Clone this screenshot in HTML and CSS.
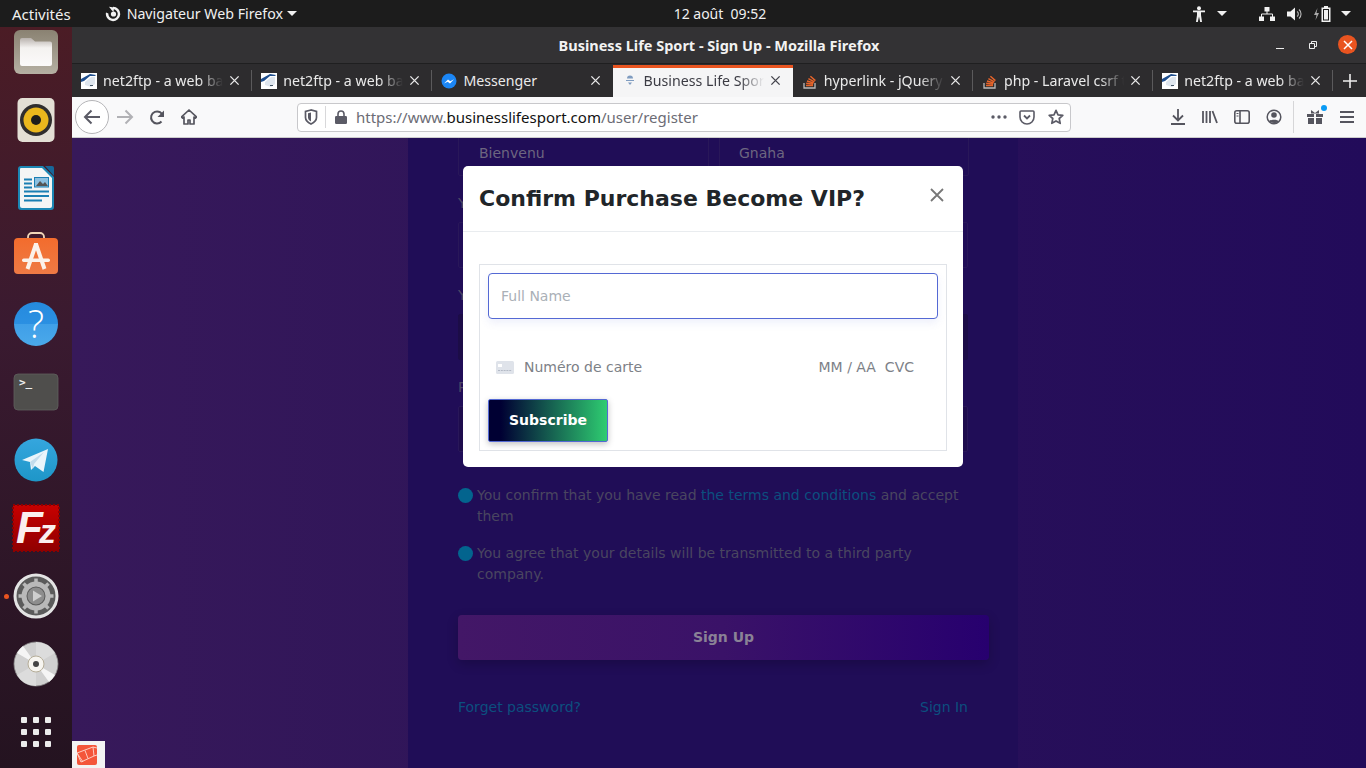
FILE: index.html
```html
<!DOCTYPE html>
<html lang="fr">
<head>
<meta charset="utf-8">
<title>Business Life Sport - Sign Up</title>
<link rel="stylesheet" href="styles.css">
</head>
<body>
<svg class="defs" width="0" height="0" aria-hidden="true">
  <defs>
    <symbol id="fav-net" viewBox="0 0 16 16"><rect width="16" height="16" fill="#fff"/><path d="M0 6 9 1l6 1-1 1-5 0-6 5-3 1z" fill="#1f4f8f"/><path d="M4 9l6-5 4 0 0 7-4 3-6-2z" fill="#dfe6ee"/><path d="M9 12h3v1H9z" fill="#456"/></symbol>
    <symbol id="fav-so" viewBox="0 0 16 16"><path d="M2 10v5h11v-5" fill="none" stroke="#bcbbbb" stroke-width="1.3"/><path d="M4 12.5h7M4.2 10.3l6.9.8M5 8l6.6 2M6.4 5.6l6 3.2M8.4 3.3l5 4.3" fill="none" stroke="#e8642a" stroke-width="1.4"/></symbol>
    <symbol id="tab-x" viewBox="0 0 12 12"><path d="M1.5 1.5l9 9M10.500 1.500l-9 9" fill="none" stroke="currentColor" stroke-width="1.500"/></symbol>
  </defs>
</svg>
<div class="screen">
  <header class="topbar">
    <div class="tb-left">
      <span class="tb-activities">Activités</span>
      <span class="tb-app">
        <svg class="tb-spin" viewBox="0 0 16 16" width="16" height="16"><path d="M8 .8a7.200 7.200 0 1 1-7 5.600l2.400 1.100A4.700 4.700 0 1 0 8 3.300z" fill="#f2f2f2"/><path d="M4 .8 9 1.500 8.500 6 6.500 4z" fill="#f2f2f2"/><circle cx="8.500" cy="8" r="2.600" fill="#f2f2f2"/></svg>
        Navigateur Web Firefox
        <i class="caret"></i>
      </span>
    </div>
    <div class="tb-clock">12 août&nbsp;&nbsp;09:52</div>
    <div class="tb-right">
      <svg class="tb-access" viewBox="0 0 14 16" width="14" height="16"><circle cx="7" cy="2.200" r="2" fill="#f2f2f2"/><path d="M1 4.500h12v1.800H9V9l1 7H8.200L7 10.500 5.800 16H4l1-7V6.300H1z" fill="#f2f2f2"/></svg>
      <i class="caret caret-access"></i>
      <svg class="tb-net" viewBox="0 0 16 14" width="16" height="14"><path d="M5.500 0h5v4.500h-5zM0 9.500h5V14H0zM11 9.500h5V14h-5z" fill="#f2f2f2"/><path d="M8 4v3M2.500 10V7h11v3" fill="none" stroke="#f2f2f2"/></svg>
      <svg class="tb-vol" viewBox="0 0 16 14" width="16" height="14"><path d="M0 4.500h3.500L8 .5v13l-4.500-4H0z" fill="#f2f2f2"/><path d="M10 4.500a3 3 0 0 1 0 5M12 2.500a6 6 0 0 1 0 9" fill="none" stroke="#bbb" stroke-width="1.100"/></svg>
      <svg class="tb-batt" viewBox="0 0 18 16" width="18" height="16"><path d="M3.500 2 0 9h2.500L1.500 14 5 7H2.500z" fill="#aaa"/><path d="M10 0h4v1.500h2.500V16h-9V1.500H10z" fill="#f2f2f2"/><path d="M9 3h6v11.500H9z" fill="#1c1c1c"/><path d="M10 4h4v9.500h-4z" fill="#f2f2f2"/></svg>
      <i class="caret"></i>
    </div>
  </header>

  <div class="desktop">
    <nav class="dock">
      <svg class="slot" viewBox="0 0 48 48"><defs><linearGradient id="gFolder" x1="0" y1="0" x2="0" y2="1"><stop offset="0" stop-color="#8a8272"/><stop offset="1" stop-color="#b5b0a3"/></linearGradient><linearGradient id="gFolderIn" x1="0" y1="0" x2="0" y2="1"><stop offset="0" stop-color="#b9b2ae"/><stop offset=".35" stop-color="#f4f2f0"/><stop offset="1" stop-color="#fbfafa"/></linearGradient></defs><rect x="2" y="2" width="44" height="44" rx="6" fill="url(#gFolder)"/><path d="M8 12a2 2 0 0 1 2-2h9l4 3.500h15a2 2 0 0 1 2 2V36a2 2 0 0 1-2 2H10a2 2 0 0 1-2-2z" fill="url(#gFolderIn)"/></svg>
      <svg class="slot" viewBox="0 0 48 48"><rect x="5.500" y="2" width="37" height="44" rx="5" fill="#e3dfd5"/><circle cx="24" cy="24" r="16" fill="#2f2e2e"/><circle cx="24" cy="24" r="12.500" fill="#eab71d"/><circle cx="24" cy="24" r="5" fill="#1d1c1c"/></svg>
      <svg class="slot" viewBox="0 0 48 48"><path d="M9 2h22l11 11v30a3 3 0 0 1-3 3H9a3 3 0 0 1-3-3V5a3 3 0 0 1 3-3z" fill="#1b87b5"/><path d="M9 4h21l10 10v28a2 2 0 0 1-2 2H10a2 2 0 0 1-2-2V5a1 1 0 0 1 1-1z" fill="#f4f5f5"/><path d="M33 2h7a2 2 0 0 1 2 2v8z" fill="#17679a"/><path d="M12 14.500h8v2h-8zM12 18.500h8v2h-8zM12 22.500h8v2h-8zM12 26.500h25v2H12zM12 31h25v2H12zM12 35.500h18v2H12z" fill="#1b7fb3"/><rect x="22.500" y="13.500" width="14" height="9.500" fill="#8cc0e0" stroke="#1b7fb3"/><path d="M24 22l4-5 3 3 2-2 3 4z" fill="#555"/></svg>
      <svg class="slot" viewBox="0 0 48 48"><defs><linearGradient id="gBag" x1="0" y1="0" x2="0" y2="1"><stop offset="0" stop-color="#f36c2d"/><stop offset="1" stop-color="#ee7a45"/></linearGradient></defs><path d="M16 8V5a4 4 0 0 1 4-4h8a4 4 0 0 1 4 4v3" fill="none" stroke="#f1d6b8" stroke-width="1.800"/><rect x="2" y="6" width="44" height="36" rx="4" fill="url(#gBag)"/><path d="M24 12 15.500 37M24 12l8.500 25" fill="none" stroke="#fbf1ea" stroke-width="4"/><path d="M22 11h4v4h-4z" fill="#fbf1ea"/><rect x="10" y="26.500" width="28" height="3.500" rx="1.700" fill="#fbf1ea"/></svg>
      <svg class="slot" viewBox="0 0 48 48"><defs><linearGradient id="gHelp" x1="0" y1="0" x2="0" y2="1"><stop offset="0" stop-color="#258ade"/><stop offset=".5" stop-color="#2b90e2"/><stop offset=".5" stop-color="#3f9fe8"/><stop offset="1" stop-color="#4aa9ea"/></linearGradient></defs><circle cx="24" cy="24" r="22" fill="url(#gHelp)"/><text class="svg-help" x="24" y="38" text-anchor="middle">?</text></svg>
      <svg class="slot" viewBox="0 0 48 48"><rect x="2" y="6" width="44" height="36" rx="4" fill="#4f4e4c" stroke="#605f5d" stroke-width=".8"/><text class="svg-term" x="7" y="18">&gt;_</text></svg>
      <svg class="slot" viewBox="0 0 48 48"><defs><linearGradient id="gTg" x1="0" y1="0" x2="0" y2="1"><stop offset="0" stop-color="#35a6de"/><stop offset="1" stop-color="#1e96c8"/></linearGradient></defs><circle cx="24" cy="24" r="21.500" fill="url(#gTg)"/><path d="M10 24 36 13l-4.500 23-8.500-6-4 4-1-8z" fill="#eaf5fb"/><path d="M18 26l14-10-10 12-1 5z" fill="#c3dcec"/></svg>
      <svg class="slot" viewBox="0 0 48 48"><defs><linearGradient id="gFz" x1="0" y1="0" x2="0" y2="1"><stop offset="0" stop-color="#c80000"/><stop offset="1" stop-color="#900000"/></linearGradient></defs><rect x="1" y="1" width="46" height="46" fill="url(#gFz)" stroke="#8e0000" stroke-dasharray="2 2" stroke-width="2"/><text class="svg-fz" x="24" y="39" text-anchor="middle">F<tspan class="svg-fz-z" dx="-4">z</tspan></text></svg>
      <span class="slot-wrap"><i class="dot-run"></i>
      <svg class="slot" viewBox="0 0 48 48"><circle cx="24" cy="24" r="21" fill="#5b5b5b" stroke="#e4e4e4" stroke-width="3"/><circle cx="24" cy="24" r="12" fill="none" stroke="#b9b9b9" stroke-width="5"/><path d="M24 6.500v5M24 36.500v5M6.500 24h5M36.500 24h5M11.500 11.500l3.500 3.500M33 33l3.500 3.500M11.500 36.500l3.500-3.500M33 15l3.500-3.500" stroke="#b9b9b9" stroke-width="3.500"/><circle cx="24" cy="24" r="8.500" fill="#8d8d8d"/><path d="M21 18.500 30 24l-9 5.500z" fill="#cfcfcf"/></svg></span>
      <svg class="slot" viewBox="0 0 48 48"><circle cx="24" cy="24" r="22" fill="#d0d0d0" stroke="#8b8b8b" stroke-width=".8"/><path d="M24 24 5 13a22 22 0 0 1 6-7zM24 24l19 11a22 22 0 0 1-6 7z" fill="#f5f5f5"/><path d="M24 24V2a22 22 0 0 1 19 11zM24 24v22A22 22 0 0 1 5 35z" fill="#dcdcdc"/><circle cx="24" cy="24" r="8" fill="#f7f5f0" stroke="#b5ad98"/><circle cx="24" cy="24" r="3" fill="#444"/></svg>
      <div class="slot apps"><i></i><i></i><i></i><i></i><i></i><i></i><i></i><i></i><i></i></div>
    </nav>

    <main class="browser">
      <div class="titlebar">
        <span class="tt">Business Life Sport - Sign Up - Mozilla Firefox</span>
        <div class="win-btns">
          <svg class="win-min" viewBox="0 0 10 10" width="10" height="10"><path d="M1 8.500h8" stroke="#eee" stroke-width="1"/></svg>
          <svg class="win-max" viewBox="0 0 10 10" width="10" height="10"><path d="M1.500 3.500h5v5h-5zM3.500 3V1.500h5v5H7" fill="none" stroke="#eee"/></svg>
          <span class="win-close"><svg viewBox="0 0 10 10" width="10" height="10"><path d="M1 1l8 8M9 1l-8 8" stroke="#fff" stroke-width="1.500"/></svg></span>
        </div>
      </div>

      <div class="tabs">
        <div class="tab"><svg class="fav"><use href="#fav-net"/></svg><span class="tab-t">net2ftp - a web based ftp client</span><svg class="tab-close"><use href="#tab-x"/></svg></div>
        <div class="tab"><svg class="fav"><use href="#fav-net"/></svg><span class="tab-t">net2ftp - a web based ftp client</span><svg class="tab-close"><use href="#tab-x"/></svg></div>
        <div class="tab tab-plain"><svg class="fav" viewBox="0 0 16 16"><circle cx="8" cy="8" r="7.500" fill="#1b86f5"/><path d="M3 10.500 7 6.500l2.300 1.800 3.700-2-4 4.200-2.300-1.800z" fill="#fff"/></svg><span class="tab-t">Messenger</span><svg class="tab-close"><use href="#tab-x"/></svg></div>
        <div class="tab tab-active"><svg class="fav" viewBox="0 0 16 16"><path d="M5 5.500a3 3 0 0 1 6 0zM4 7h8v1H4zM6 9.500h4L8 12z" fill="#7f9cc0"/></svg><span class="tab-t">Business Life Sport - Sign Up</span><svg class="tab-close"><use href="#tab-x"/></svg></div>
        <div class="tab"><svg class="fav"><use href="#fav-so"/></svg><span class="tab-t">hyperlink - jQuery how to</span><svg class="tab-close"><use href="#tab-x"/></svg></div>
        <div class="tab"><svg class="fav"><use href="#fav-so"/></svg><span class="tab-t">php - Laravel csrf token</span><svg class="tab-close"><use href="#tab-x"/></svg></div>
        <div class="tab"><svg class="fav"><use href="#fav-net"/></svg><span class="tab-t">net2ftp - a web based ftp client</span><svg class="tab-close"><use href="#tab-x"/></svg></div>
        <div class="tab-new"><svg viewBox="0 0 14 14" width="14" height="14"><path d="M7 0v14M0 7h14" stroke="#eee" stroke-width="1.600"/></svg></div>
      </div>

      <div class="navbar">
        <span class="nav-back"><svg viewBox="0 0 18 16" width="18" height="16"><path d="M17 8H2M8.500 1.500 2 8l6.500 6.500" fill="none" stroke="#5b5b66" stroke-width="2"/></svg></span>
        <span class="nav-btn"><svg viewBox="0 0 18 16" width="18" height="16"><path d="M1 8h15M9.500 1.500 16 8l-6.500 6.500" fill="none" stroke="#b1b1b5" stroke-width="2"/></svg></span>
        <span class="nav-btn"><svg viewBox="0 0 16 16" width="16" height="16"><path d="M14 7.500A6 6 0 1 0 12.500 12.500" fill="none" stroke="#55555e" stroke-width="2"/><path d="M15 1.500v6.500H8.500z" fill="#55555e"/></svg></span>
        <span class="nav-btn"><svg viewBox="0 0 16 16" width="16" height="16"><path d="M8 1 .5 8l1.200 1.200L3 8v7h4v-4h2v4h4V8l1.300 1.200L15.500 8z" fill="none" stroke="#55555e" stroke-width="1.700" stroke-linejoin="round"/></svg></span>
        <div class="urlbar">
          <svg class="u-shield" viewBox="0 0 14 16" width="14" height="16"><path d="M7 1 1.500 2.500v6C1.500 12 5 14 7 15c2-1 5.500-3 5.500-6.500v-6z" fill="none" stroke="#5b5b66" stroke-width="1.700"/><path d="M7 3.500v9c-1.500-.8-3-2-3-4V4.200z" fill="#5b5b66"/></svg>
          <i class="u-sep"></i>
          <svg class="u-lock" viewBox="0 0 12 14" width="12" height="14"><path d="M3 6V4a3 3 0 0 1 6 0v2" fill="none" stroke="#5b5b66" stroke-width="1.600"/><rect y="6" width="12" height="8" rx="1.200" fill="#5b5b66"/></svg>
          <span class="u-text"><span class="u-dim">https://www.</span>businesslifesport.com<span class="u-dim">/user/register</span></span>
          <svg class="u-dots" viewBox="0 0 16 4" width="16" height="4"><circle cx="2" cy="2" r="1.700" fill="#5b5b66"/><circle cx="8" cy="2" r="1.700" fill="#5b5b66"/><circle cx="14" cy="2" r="1.700" fill="#5b5b66"/></svg>
          <svg class="u-pocket" viewBox="0 0 16 15" width="16" height="15"><path d="M2 1h12a1 1 0 0 1 1 1v5a7 7 0 0 1-14 0V2a1 1 0 0 1 1-1z" fill="none" stroke="#5b5b66" stroke-width="1.600"/><path d="M5 5.500 8 8.500l3-3" fill="none" stroke="#5b5b66" stroke-width="1.800"/></svg>
          <svg class="u-star" viewBox="0 0 16 16" width="16" height="16"><path d="M8 1.300l2 4.500 4.800.5-3.600 3.200 1 4.800L8 11.900l-4.200 2.400 1-4.800L1.200 6.300 6 5.800z" fill="none" stroke="#5b5b66" stroke-width="1.700" stroke-linejoin="round"/></svg>
        </div>
        <span class="nav-btn nav-first"><svg viewBox="0 0 14 16" width="14" height="16"><path d="M7 0v11M2 6.500l5 5 5-5M0 15h14" fill="none" stroke="#55555e" stroke-width="1.800"/></svg></span>
        <span class="nav-btn"><svg viewBox="0 0 16 14" width="16" height="14"><path d="M1 1v12M4.500 1v12M8 1v12M10.500 1l4.500 12" fill="none" stroke="#55555e" stroke-width="1.800"/></svg></span>
        <span class="nav-btn"><svg viewBox="0 0 16 14" width="16" height="14"><rect x=".8" y=".8" width="14.400" height="12.400" rx="2" fill="none" stroke="#55555e" stroke-width="1.600"/><path d="M6 1v12" stroke="#55555e" stroke-width="1.600"/><path d="M2.500 3.500h2M2.500 6h2" stroke="#55555e"/></svg></span>
        <span class="nav-btn"><svg viewBox="0 0 16 16" width="16" height="16"><circle cx="8" cy="8" r="6.800" fill="none" stroke="#55555e" stroke-width="1.500"/><circle cx="8" cy="6" r="2.800" fill="#55555e"/><path d="M3 12.500c1-2.500 9-2.500 10 0-2 2-8 2-10 0z" fill="#55555e"/></svg></span>
        <i class="nav-sep"></i>
        <span class="nav-btn nav-gift"><svg viewBox="0 0 16 16" width="16" height="16"><path d="M0 5h7v3H0zM9 5h7v3H9zM1 9h6v6H1zM9 9h6v6H9z" fill="#55555e"/><path d="M4 1l4 3 4-3v3.500H4z" fill="#55555e"/></svg><i class="gift-dot"></i></span>
        <span class="nav-btn"><svg viewBox="0 0 14 12" width="14" height="12"><path d="M0 1h14M0 6h14M0 11h14" stroke="#55555e" stroke-width="1.800"/></svg></span>
      </div>

      <div class="page">
        <section class="card">
          <div class="name-row">
            <div class="field field-top">Bienvenu</div>
            <div class="field field-top field-right">Gnaha</div>
          </div>
          <div class="group"><label class="lbl">Your Username</label><div class="field"></div></div>
          <div class="group"><label class="lbl">Your Email</label><div class="field field-dark"></div></div>
          <div class="group"><label class="lbl">Password</label><div class="field field-dark2"></div></div>
          <ul class="terms">
            <li>You confirm that you have read <a>the terms and conditions</a> and accept them</li>
            <li>You agree that your details will be transmitted to a third party company.</li>
          </ul>
          <div class="signup">Sign Up</div>
          <div class="links"><a>Forget password?</a><a>Sign In</a></div>
        </section>

        <div class="laravel"><svg viewBox="0 0 20 20" width="20" height="20"><rect width="20" height="20" rx="2" fill="#f4553a"/><path d="M0 8 16 2l1 9-13 6zM0 8l6 9M8 5.500l3 8M17 11l3-1M16 2l4 1" fill="none" stroke="#ffd9d0" stroke-width=".9"/></svg></div>

        <div class="modal" role="dialog">
          <div class="modal-head">
            <h4>Confirm Purchase Become VIP?</h4>
            <svg class="modal-x" viewBox="0 0 14 14" width="14" height="14"><path d="M1 1l12 12M13 1 1 13" stroke="#777" stroke-width="1.800"/></svg>
          </div>
          <div class="modal-body">
            <form class="pay">
              <input class="pay-name" placeholder="Full Name">
              <div class="pay-card">
                <svg viewBox="0 0 18 13" width="18" height="13"><rect width="18" height="13" rx="1.500" fill="#dfe3ea"/><rect x="2" y="3" width="4" height="3" fill="#fff"/><path d="M2 9.500h14" stroke="#b4bac6" stroke-dasharray="2 .8"/></svg>
                <span class="pay-num">Numéro de carte</span>
                <span class="pay-exp">MM / AA</span>
                <span class="pay-cvc">CVC</span>
              </div>
              <button class="pay-btn" type="button">Subscribe</button>
            </form>
          </div>
        </div>
      </div>
    </main>
  </div>
</div>
</body>
</html>
```

FILE: styles.css
```css
* { box-sizing: border-box; }
html, body { margin: 0; padding: 0; height: 100%; overflow: hidden; }
body { font-family: "DejaVu Sans", sans-serif; background: #000; }
.defs { position: absolute; }
.screen { width: 1366px; height: 768px; display: flex; flex-direction: column; overflow: hidden; }

/* top bar */
.topbar { flex: 0 0 27px; height: 27px; background: #1c1c1c; color: #f0f0f0; font: 14.200px "Noto Sans", sans-serif; display: grid; grid-template-columns: 1fr auto 1fr; align-items: center; }
.tb-left { display: flex; align-items: center; padding-left: 12px; }
.tb-activities { font-size: 15px; }
.tb-app { display: flex; align-items: center; margin-left: 34px; gap: 6px; }
.tb-app .caret { margin-left: -2px; }
.tb-clock { font-size: 14px; margin-left: 74px; }
.tb-right { display: flex; align-items: center; justify-content: flex-end; padding-right: 15px; }
.caret { display: inline-block; width: 0; height: 0; border-left: 5px solid transparent; border-right: 5px solid transparent; border-top: 5px solid #f0f0f0; }
.tb-access { margin-right: 11px; }
.caret-access { margin-right: 32px; }
.tb-vol { margin-left: 12px; }
.tb-batt { margin: 0 9px 0 11px; }

/* dock */
.desktop { flex: 1; display: flex; min-height: 0; }
.dock { flex: 0 0 72px; width: 72px; padding-top: 1px; display: flex; flex-direction: column; align-items: center; gap: 20px; background: linear-gradient(180deg, #4b1c25 0%, #3a1a30 40%, #241320 100%); }
.slot { width: 48px; height: 48px; display: block; flex: none; }
.slot-wrap { position: relative; display: block; width: 48px; height: 48px; }
.dot-run { position: absolute; left: -8px; top: 22px; width: 5px; height: 5px; border-radius: 50%; background: #e95420; }
.svg-help { font: 300 38px "Open Sans", sans-serif; fill: #fff; }
.svg-term { font: bold 11px "DejaVu Sans Mono", monospace; fill: #eee; }
.svg-fz { font: italic 700 44px "Liberation Sans", sans-serif; fill: #fbeeee; }
.svg-fz-z { font-size: 34px; }
.apps { display: grid; grid-template-columns: repeat(3, 6px); grid-auto-rows: 6px; gap: 6px; padding: 9px; }
.apps i { background: #ececec; border-radius: 1px; }

/* browser */
.browser { flex: 1; display: flex; flex-direction: column; min-width: 0; }
.titlebar { flex: 0 0 37px; background: #333234; display: flex; align-items: center; justify-content: center; position: relative; border-bottom: 1px solid #1f1f20; }
.tt { font: 700 14.500px "Noto Sans", sans-serif; color: #f2f2f2; }
.win-btns { position: absolute; right: 9px; top: 8px; display: flex; align-items: center; }
.win-max { margin: 0 20px 0 23px; }
.win-close { width: 19px; height: 19px; border-radius: 50%; background: #e95420; display: flex; align-items: center; justify-content: center; }

.tabs { flex: 0 0 33px; background: #2d2c2e; display: flex; font: 14.200px "Noto Sans", sans-serif; color: #eaeaea; }
.tab { flex: 0 0 180.200px; width: 180.200px; min-width: 0; display: flex; align-items: center; padding: 0 12px 0 9px; position: relative; }
.tab::after { content: ""; position: absolute; right: 0; top: 6px; bottom: 6px; width: 1px; background: #5b5a5c; }
.tab-t { flex: 1; min-width: 0; margin: 0 6px; white-space: nowrap; overflow: hidden; -webkit-mask-image: linear-gradient(90deg, #000 80%, transparent 100%); mask-image: linear-gradient(90deg, #000 80%, transparent 100%); }
.tab-plain .tab-t { -webkit-mask-image: none; mask-image: none; }
.fav { width: 16px; height: 16px; flex: none; }
.tab-close { width: 11px; height: 11px; flex: none; color: #e8e8e8; }
.tab-active { background: #f5f5f6; color: #3c3c44; box-shadow: inset 0 3px 0 #e95420; margin-top: 1px; padding-bottom: 1px; }
.tab-active .tab-close { color: #45454d; }
.tab-active::after, .tab-plain::after { display: none; }
.tab-new { flex: 1; display: flex; align-items: center; justify-content: center; }

.navbar { flex: 0 0 41px; background: #f9f9fa; display: flex; align-items: center; padding-left: 3px; border-bottom: 1px solid #ccc; }
.nav-back { width: 34px; height: 34px; border-radius: 50%; background: #fff; border: 1px solid #b5b5b8; display: flex; align-items: center; justify-content: center; flex: none; }
.nav-btn { width: 32px; height: 32px; display: flex; align-items: center; justify-content: center; flex: none; position: relative; }
.urlbar { margin-left: 92px; width: 774px; height: 29px; flex: none; background: #fff; border: 1px solid #c8c8cb; border-radius: 4px; display: flex; align-items: center; padding: 0 6px 0 6px; }
.u-shield { flex: none; }
.u-sep { width: 1px; height: 22px; background: #d8d8da; margin-left: 7px; }
.u-lock { margin-left: 9px; flex: none; }
.u-text { margin-left: 9px; flex: 1; font: 15px "Noto Sans", sans-serif; color: #111; white-space: nowrap; }
.u-dim { color: #6c6c75; }
.u-pocket { margin-left: 12px; }
.u-star { margin-left: 13px; }
.nav-first { margin-left: 91px; }
.nav-sep { width: 1px; height: 32px; background: #d6d6d8; margin: 0 5px 0 3px; flex: none; }
.gift-dot { position: absolute; top: 4px; right: 4px; width: 6px; height: 6px; border-radius: 50%; background: #0a9bf5; }

/* page */
.page { flex: 1; position: relative; overflow: hidden; background: linear-gradient(90deg, #37195a 0%, #2c1359 45%, #220b5a 100%); }
.card { position: absolute; top: -8px; left: 336px; width: 610px; height: 660px; padding: 0 50px 0 50px; background: #200d57; border-radius: 8px; font-size: 14px; color: #4a4660; }
.name-row { display: flex; gap: 10px; height: 46px; }
.field { flex: 1; height: 46px; border: 1px solid #291759; border-radius: 2px; padding: 13px 20px; font-size: 14px; color: #6d6680; line-height: 18px; }
.field-dark { background: #1c0c47; border-color: #1c0c47; }
.field-dark2 { background: #1e0c4d; }
.field-right { margin-right: -1px; padding-left: 19px; }
.group { height: 92px; padding-top: 16px; }
.lbl { display: block; height: 22px; margin-bottom: 8px; line-height: 22px; color: #4d4866; }
.terms { list-style: none; margin: 33px 0 0; padding: 0; line-height: 21px; }
.terms li { position: relative; padding-left: 19px; margin-bottom: 16px; }
.terms li::before { content: ""; position: absolute; left: 0; top: 3px; width: 15px; height: 15px; border-radius: 50%; background: #03648e; }
.terms a, .links a { color: #0c4f7f; }
.signup { margin: 30px -21px 0 0; height: 45px; padding-bottom: 2px; border-radius: 4px; background: linear-gradient(90deg, #431767 0%, #3a1268 50%, #27006f 100%); color: #8a8296; font-weight: 700; font-size: 14px; display: flex; align-items: center; justify-content: center; box-shadow: 0 4px 12px rgba(0,0,0,.2); }
.links { display: flex; justify-content: space-between; margin-top: 37px; line-height: 21px; }
.laravel { position: absolute; left: 0; bottom: 0; width: 33px; height: 27px; background: #f3f3f3; display: flex; align-items: flex-start; justify-content: center; padding-top: 4px; padding-right: 4px; }

/* modal */
.modal { position: absolute; left: 391px; top: 28px; width: 500px; height: 301px; background: #fff; border-radius: 5px; display: flex; flex-direction: column; color: #212529; }
.modal-head { height: 66px; padding: 16px; border-bottom: 1px solid #e9ecef; display: flex; justify-content: space-between; }
.modal-head h4 { margin: 0; font-size: 22px; line-height: 33px; font-weight: 700; }
.modal-x { margin: 6px 3px 0 0; }
.modal-body { flex: 1; padding: 32px 16px 16px; }
.pay { height: 187px; border: 1px solid #e0e3e8; padding: 8px; display: flex; flex-direction: column; align-items: flex-start; }
.pay-name { width: 450px; height: 46px; border: 1px solid #5469d4; border-radius: 4px; padding: 0 12px; font: 14px "DejaVu Sans", sans-serif; color: #333; box-shadow: 0 4px 8px rgba(84,105,212,.1); outline: 0; }
.pay-name::placeholder { color: #aab0b7; opacity: 1; }
.pay-card { margin-top: 28px; width: 450px; height: 40px; padding-left: 8px; display: flex; align-items: center; font-size: 14px; color: #7d8187; }
.pay-num { margin-left: 10px; flex: 1; }
.pay-cvc { margin: 0 24px 0 9px; }
.pay-btn { margin-top: 12px; width: 120px; height: 43px; border: 1px solid #5469d4; border-radius: 2px; background: linear-gradient(90deg, #000033 10%, #2ecc71 100%); color: #fff; font: 700 14px "DejaVu Sans", sans-serif; box-shadow: 0 2px 6px rgba(0,0,0,.25); padding: 0 0 2px; }
```
